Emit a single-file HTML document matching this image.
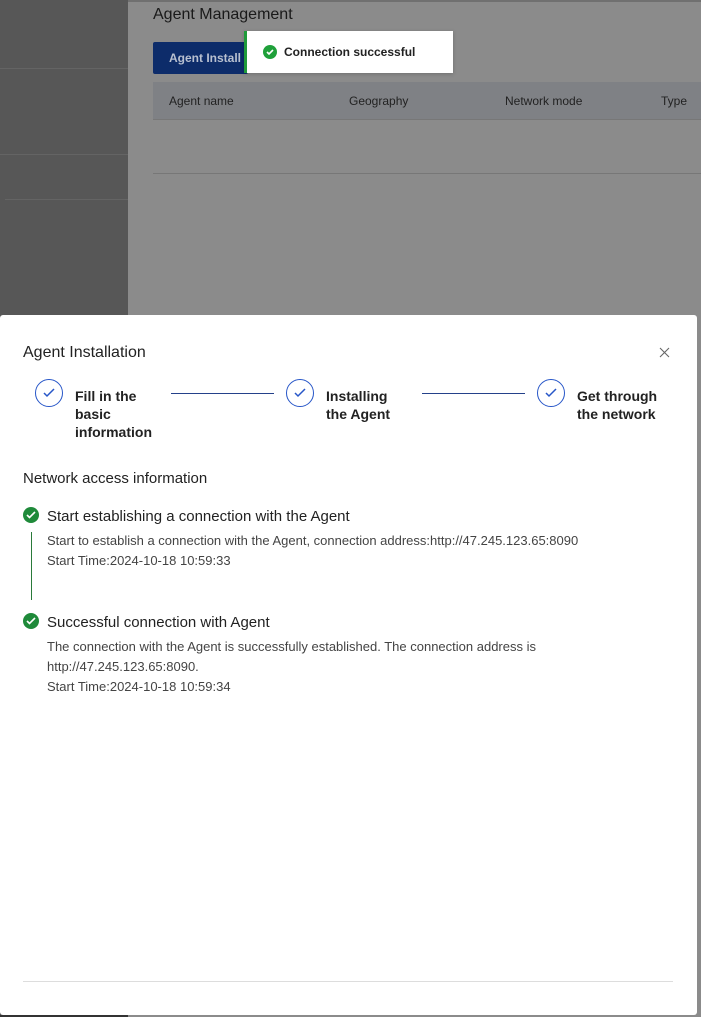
<!DOCTYPE html>
<html><head><meta charset="utf-8"><style>
*{margin:0;padding:0;box-sizing:border-box}
body{width:701px;height:1017px;position:relative;overflow:hidden;font-family:"Liberation Sans",sans-serif;background:#8c8c8c}
.side{position:absolute;left:0;top:0;width:128px;height:1017px;background:#575757}
.hl{position:absolute;height:1px;background:#646464}
.main{position:absolute;left:128px;top:0;right:0;height:1017px;background:#8b8b8b;border-top:2px solid #707070}
.abs{position:absolute}
.modal{position:absolute;left:0;top:315px;width:697px;height:700px;background:#fff;border-radius:3px}
.step{position:absolute;top:379px;width:28px;height:28px;border:1.5px solid #2756c8;border-radius:50%}
.step svg{position:absolute;left:7px;top:8px}
.sl{position:absolute;font-size:14px;font-weight:bold;color:#222;line-height:18px}
.line{position:absolute;top:393px;height:1px;background:#24418a}
.ok{position:absolute;width:16px;height:16px;border-radius:50%;background:#1f8a3a}
.ok svg{position:absolute;left:3px;top:4px}
.t{position:absolute;font-size:15px;color:#222}
.d{position:absolute;font-size:13px;color:#444;line-height:20px}
</style></head><body>
<div class="side"></div>
<div class="hl" style="left:0;top:68px;width:128px"></div>
<div class="hl" style="left:0;top:154px;width:128px"></div>
<div class="hl" style="left:5px;top:199px;width:123px"></div>
<div class="main"></div>
<div class="abs" style="left:153px;top:6px;font-size:16px;color:#1a1a1a">Agent Management</div>
<div class="abs" style="left:153px;top:42px;width:95px;height:32px;background:#0d2c6a;border-radius:2px;color:#b8c0d0;font-size:12px;font-weight:bold;padding:9px 0 0 16px">Agent Install</div>
<div class="abs" style="left:244px;top:31px;width:209px;height:42px;background:#fff;border-left:3px solid #1f9a3a;box-shadow:0 1px 4px rgba(0,0,0,.2)"></div>
<div class="ok" style="left:263px;top:45px;width:14px;height:14px;background:#1fa03a"><svg width="8" height="6" viewBox="0 0 8 6" style="left:3px;top:4px"><path d="M1 3l2 2 4-4" stroke="#fff" stroke-width="1.6" fill="none"/></svg></div>
<div class="abs" style="left:284px;top:45px;font-size:12px;font-weight:bold;color:#222">Connection successful</div>
<div class="abs" style="left:153px;top:82px;width:548px;height:38px;background:#7f8185;border-bottom:1px solid #777"></div>
<div class="abs" style="left:169px;top:94px;font-size:12px;color:#222">Agent name</div>
<div class="abs" style="left:349px;top:94px;font-size:12px;color:#222">Geography</div>
<div class="abs" style="left:505px;top:94px;font-size:12px;color:#222">Network mode</div>
<div class="abs" style="left:661px;top:94px;font-size:12px;color:#222">Type</div>
<div class="abs" style="left:153px;top:173px;width:548px;height:1px;background:#777"></div>

<div class="modal"></div>
<div class="abs" style="left:0;top:1015px;width:128px;height:2px;background:#333"></div>
<div class="abs" style="left:23px;top:344px;font-size:16px;color:#222">Agent Installation</div>
<svg class="abs" style="left:659px;top:347px" width="11" height="11" viewBox="0 0 11 11"><path d="M1 1l9 9M10 1l-9 9" stroke="#666" stroke-width="1.1"/></svg>

<div class="step" style="left:35px"><svg width="12" height="10" viewBox="0 0 12 10"><path d="M1 5l3 3 7-7" stroke="#2756c8" stroke-width="1.5" fill="none"/></svg></div>
<div class="sl" style="left:75px;top:387px">Fill in the<br>basic<br>information</div>
<div class="line" style="left:171px;width:103px"></div>
<div class="step" style="left:286px"><svg width="12" height="10" viewBox="0 0 12 10"><path d="M1 5l3 3 7-7" stroke="#2756c8" stroke-width="1.5" fill="none"/></svg></div>
<div class="sl" style="left:326px;top:387px">Installing<br>the Agent</div>
<div class="line" style="left:422px;width:103px"></div>
<div class="step" style="left:537px"><svg width="12" height="10" viewBox="0 0 12 10"><path d="M1 5l3 3 7-7" stroke="#2756c8" stroke-width="1.5" fill="none"/></svg></div>
<div class="sl" style="left:577px;top:387px">Get through<br>the network</div>

<div class="t" style="left:23px;top:470px">Network access information</div>
<div class="ok" style="left:23px;top:507px"><svg width="10" height="8" viewBox="0 0 10 8"><path d="M1 4l2.5 2.5L9 1" stroke="#fff" stroke-width="1.6" fill="none"/></svg></div>
<div class="t" style="left:47px;top:508px">Start establishing a connection with the Agent</div>
<div class="abs" style="left:31px;top:532px;width:1px;height:68px;background:#2a7a3a"></div>
<div class="d" style="left:47px;top:531px">Start to establish a connection with the Agent, connection address:http://47.245.123.65:8090<br>Start Time:2024-10-18 10:59:33</div>
<div class="ok" style="left:23px;top:613px"><svg width="10" height="8" viewBox="0 0 10 8"><path d="M1 4l2.5 2.5L9 1" stroke="#fff" stroke-width="1.6" fill="none"/></svg></div>
<div class="t" style="left:47px;top:614px">Successful connection with Agent</div>
<div class="d" style="left:47px;top:637px">The connection with the Agent is successfully established. The connection address is<br>http://47.245.123.65:8090.<br>Start Time:2024-10-18 10:59:34</div>
<div class="abs" style="left:23px;top:981px;width:650px;height:1px;background:#ddd"></div>
</body></html>
